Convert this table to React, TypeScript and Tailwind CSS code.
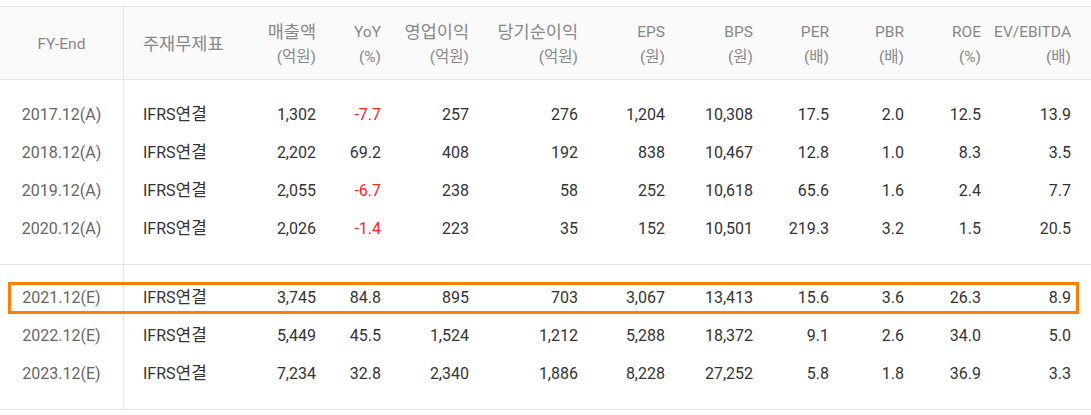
import React from "react";

type Row = {
  fy: string;
  v: string[];
};

const actual: Row[] = [
  { fy: "2017.12(A)", v: ["1,302", "-7.7", "257", "276", "1,204", "10,308", "17.5", "2.0", "12.5", "13.9"] },
  { fy: "2018.12(A)", v: ["2,202", "69.2", "408", "192", "838", "10,467", "12.8", "1.0", "8.3", "3.5"] },
  { fy: "2019.12(A)", v: ["2,055", "-6.7", "238", "58", "252", "10,618", "65.6", "1.6", "2.4", "7.7"] },
  { fy: "2020.12(A)", v: ["2,026", "-1.4", "223", "35", "152", "10,501", "219.3", "3.2", "1.5", "20.5"] },
];

const estimates: Row[] = [
  { fy: "2021.12(E)", v: ["3,745", "84.8", "895", "703", "3,067", "13,413", "15.6", "3.6", "26.3", "8.9"] },
  { fy: "2022.12(E)", v: ["5,449", "45.5", "1,524", "1,212", "5,288", "18,372", "9.1", "2.6", "34.0", "5.0"] },
  { fy: "2023.12(E)", v: ["7,234", "32.8", "2,340", "1,886", "8,228", "27,252", "5.8", "1.8", "36.9", "3.3"] },
];

const widths = [
  "w-[100px]",
  "w-[65px]",
  "w-[88px]",
  "w-[109px]",
  "w-[87px]",
  "w-[88px]",
  "w-[76px]",
  "w-[75px]",
  "w-[77px]",
  "w-[90px]",
];

const headers: [string, string, boolean][] = [
  ["매출액", "(억원)", true],
  ["YoY", "(%)", false],
  ["영업이익", "(억원)", true],
  ["당기순이익", "(억원)", true],
  ["EPS", "(원)", false],
  ["BPS", "(원)", false],
  ["PER", "(배)", false],
  ["PBR", "(배)", false],
  ["ROE", "(%)", false],
  ["EV/EBITDA", "(배)", false],
];

function DataRow({ row, highlight }: { row: Row; highlight?: boolean }) {
  return (
    <div className="relative flex h-[38px] items-center text-[16px]">
      <div className="w-[123px] shrink-0 text-center text-[#666]">{row.fy}</div>
      <div className="w-[103px] shrink-0 pl-[20px] text-[#333]">
        IFRS<span className="text-[17px]">연결</span>
      </div>
      {row.v.map((val, i) => (
        <div
          key={i}
          className={`${widths[i]} shrink-0 pr-[10px] text-right ${
            i === 1 && val.startsWith("-") ? "text-[#f22]" : "text-[#333]"
          }`}
        >
          {val}
        </div>
      ))}
      {highlight && (
        <div className="pointer-events-none absolute left-[8px] right-[12px] top-[3px] bottom-[3px] border-[3px] border-[#ff8000]" />
      )}
    </div>
  );
}

export default function App() {
  return (
    <div
      className="w-[1091px] bg-white pt-[6px]"
      style={{ fontFamily: "Roboto, 'Noto Sans CJK KR', sans-serif" }}
    >
      <div className="relative border-t border-b border-[#e5e5e5]">
        {/* vertical divider */}
        <div className="pointer-events-none absolute left-[123px] top-0 bottom-0 w-px bg-[#e5e5e5]" />
        {/* header */}
        <div className="flex h-[72px] items-center bg-[#fafafa] pt-[3px] text-[15.5px] leading-[25px] text-[#888]">
          <div className="w-[123px] shrink-0 text-center">FY-End</div>
          <div className="w-[103px] shrink-0 pl-[20px] text-[17.5px]">주재무제표</div>
          {headers.map(([a, b, ko], i) => (
            <div key={i} className={`${widths[i]} shrink-0 pr-[10px] text-right`}>
              <div className={ko ? "text-[17.5px]" : ""}>{a}</div>
              <div>{b}</div>
            </div>
          ))}
        </div>
        <div className="border-t border-[#e5e5e5] pt-[16px] pb-[16px]">
          {actual.map((r) => (
            <DataRow key={r.fy} row={r} />
          ))}
        </div>
        <div className="border-t border-[#e5e5e5] pt-[14px] pb-[16px]">
          {estimates.map((r, i) => (
            <DataRow key={r.fy} row={r} highlight={i === 0} />
          ))}
        </div>
      </div>
    </div>
  );
}
